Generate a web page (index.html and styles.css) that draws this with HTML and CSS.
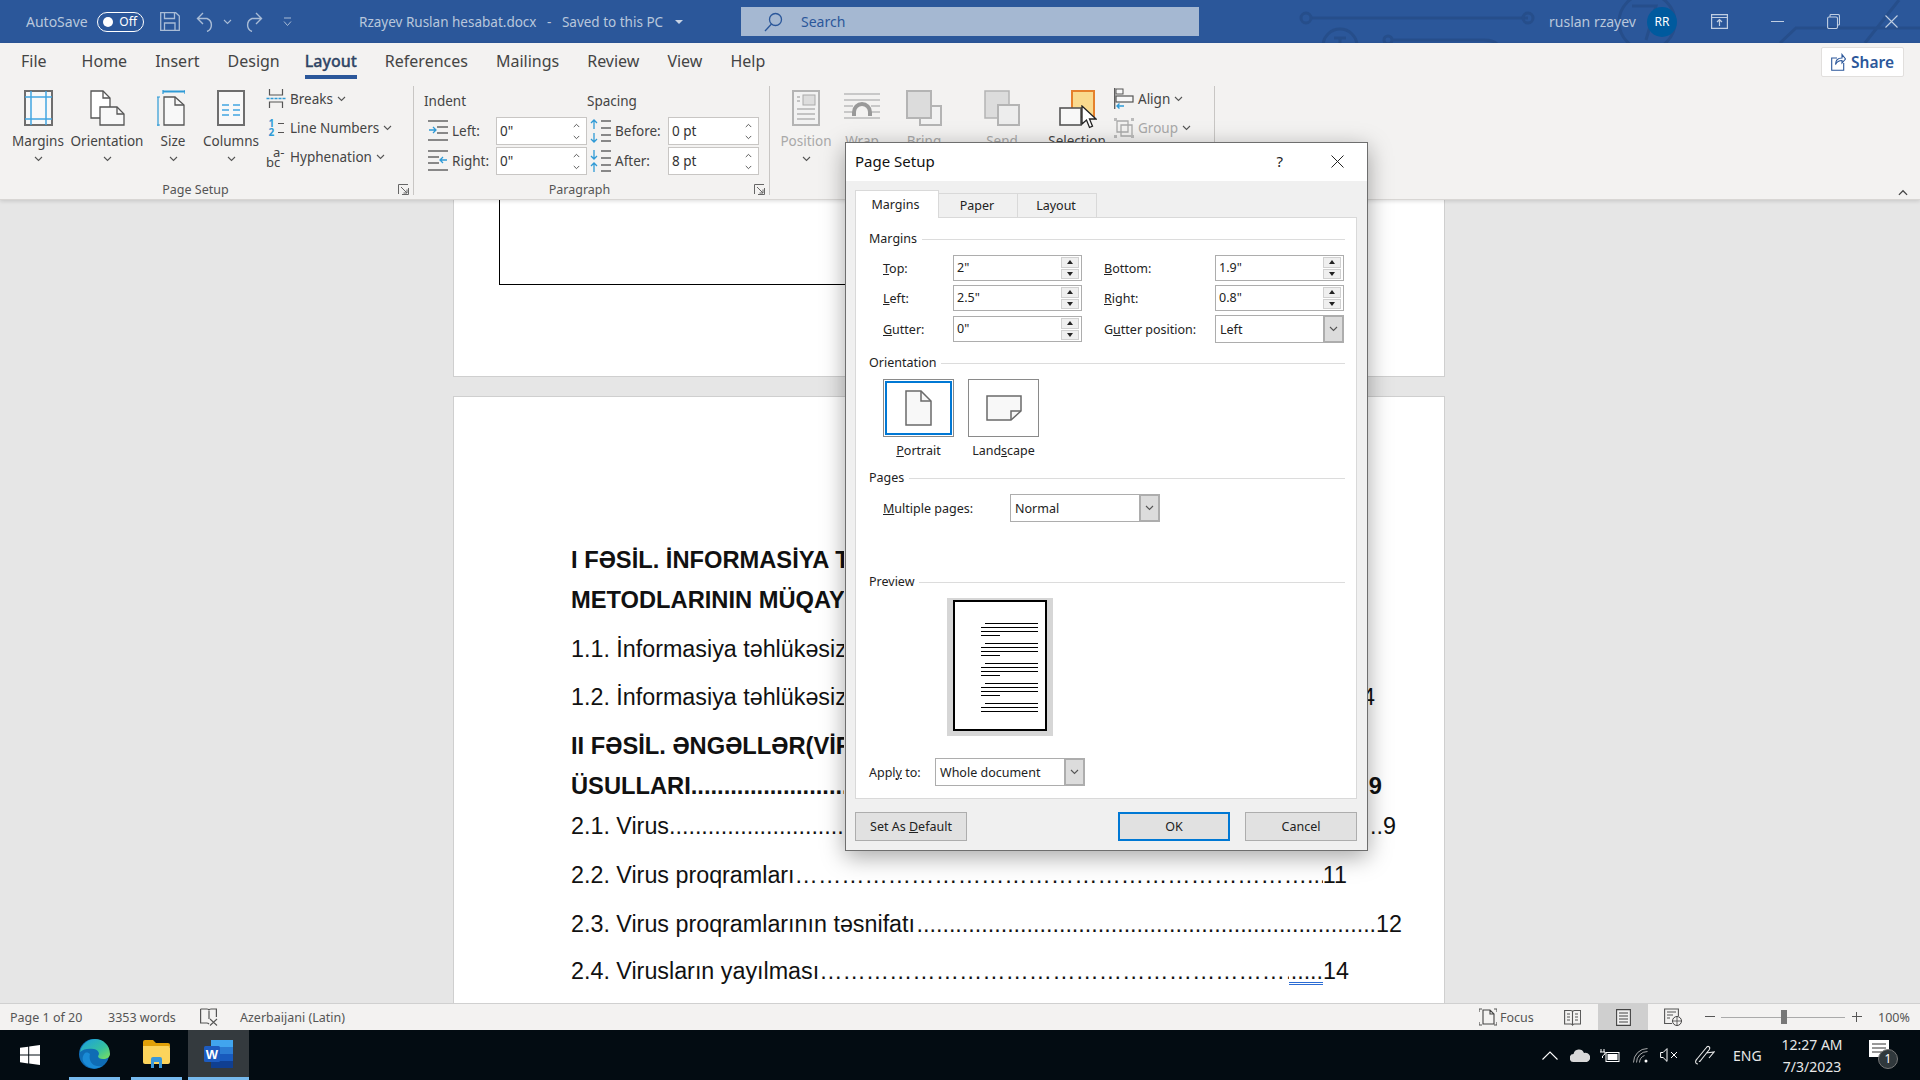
FILE: index.html
```html
<!DOCTYPE html>
<html lang="en">
<head>
    <meta charset="UTF-8">
    <title>Rzayev Ruslan hesabat.docx - Word</title>
    <link rel="stylesheet" href="styles.css">
</head>
<body>

<svg class="sprites" width="0" height="0">
    <symbol id="chev" viewBox="0 0 9 6"><path d="M1 1l3.500 3.500L8 1" fill="none" stroke="currentColor" stroke-width="1.100"/></symbol>
    <symbol id="chev-up" viewBox="0 0 9 6"><path d="M1 5l3.500-3.500L8 5" fill="none" stroke="currentColor" stroke-width="1.100"/></symbol>
    <symbol id="launcher" viewBox="0 0 11 11"><path d="M.5 10V.5H10M10.500 4v6.500H4M3 3l6 6M9 5.500V9H5.500" fill="none" stroke="#666" stroke-width="1"/></symbol>
</svg>

<!-- Title bar -->
<header class="titlebar">
    <svg class="circuit" width="640" height="43" viewBox="0 0 640 43">
        <g fill="none" stroke="#264e8b" stroke-width="3">
            <path d="M30 18h218"/>
            <circle cx="26" cy="18" r="5"/><circle cx="248" cy="18" r="5"/>
            <circle cx="60" cy="46" r="17"/><path d="M54 38h12M60 38v10"/>
            <circle cx="108" cy="40" r="4"/><path d="M112 40h92q12 0 14 6"/>
            <circle cx="367" cy="22" r="28"/><path d="M352 6h24l-10 34"/>
            <path d="M500 43l16-15h124M585 43l34-43"/>
        </g>
    </svg>
    <span class="autosave">AutoSave</span>
    <span class="toggle"><i class="toggle-dot"></i>Off</span>
    <svg class="tb-save" width="20" height="19" viewBox="0 0 20 19"><path d="M.7.7h15l3.600 3.400v14.200H.7zM4.500 1v5.500h10V1M4.500 18v-7h10.500v7" fill="none" stroke="#a9bcd6" stroke-width="1.300"/></svg>
    <svg class="tb-undo" width="20" height="20" viewBox="0 0 20 20"><path d="M7 1L1.500 6.500 7 12M2 6.500h9a7 7 0 0 1 0 13" fill="none" stroke="#a9bcd6" stroke-width="1.400"/></svg>
    <svg class="tb-chev" width="9" height="6"><use href="#chev"/></svg>
    <svg class="tb-redo" width="20" height="20" viewBox="0 0 20 20"><path d="M13 1l5.500 5.500L13 12M18 6.500H9a7 7 0 0 0 0 13" fill="none" stroke="#a9bcd6" stroke-width="1.400"/></svg>
    <svg class="tb-more" width="9" height="10" viewBox="0 0 9 10"><path d="M1 1h7M1 4.500l3.500 4 3.500-4" fill="none" stroke="#a9bcd6" stroke-width="1"/></svg>
    <span class="doc-title">Rzayev Ruslan hesabat.docx&nbsp;&nbsp;&nbsp;-&nbsp;&nbsp;&nbsp;Saved to this PC</span>
    <i class="title-caret"></i>
    <div class="search">
        <svg width="19" height="20" viewBox="0 0 19 20"><circle cx="11.500" cy="7.500" r="6" fill="none" stroke="#2b579a" stroke-width="1.300"/><path d="M7.500 12L1 19" stroke="#2b579a" stroke-width="1.300"/></svg>
        <span>Search</span>
    </div>
    <div class="tb-right">
        <span class="user">ruslan rzayev</span>
        <span class="avatar">RR</span>
        <svg class="win-display" width="17" height="15" viewBox="0 0 17 15"><path d="M.6.6h15.800v13.800H.6zM1 3.500h15M8.500 12V6M6 8l2.500-2.500L11 8" fill="none" stroke="#c0cee2" stroke-width="1.200"/></svg>
        <svg class="win-min" width="13" height="1" viewBox="0 0 13 1"><path d="M0 .5h13" stroke="#c0cee2"/></svg>
        <svg class="win-restore" width="13" height="15" viewBox="0 0 13 15"><path d="M3 3V1.500q0-1 1-1h7q1.500 0 1.500 1.500v8q0 1-1 1H11M.6 4.500q0-1.500 1.400-1.500h7q1.500 0 1.500 1.500V13q0 1.500-1.500 1.500H2Q.6 14.500.6 13z" fill="none" stroke="#c0cee2" stroke-width="1.100"/></svg>
        <svg class="win-close" width="13" height="13" viewBox="0 0 13 13"><path d="M.5.500l12 12M12.500.500l-12 12" stroke="#c0cee2" stroke-width="1.100"/></svg>
    </div>
</header>

<!-- Ribbon -->
<section class="ribbon">
    <nav class="tabs">
        <span class="tab tab-file">File</span>
        <span class="tab">Home</span>
        <span class="tab">Insert</span>
        <span class="tab">Design</span>
        <span class="tab tab-active">Layout</span>
        <span class="tab">References</span>
        <span class="tab">Mailings</span>
        <span class="tab">Review</span>
        <span class="tab">View</span>
        <span class="tab">Help</span>
        <button class="share">
            <svg width="15" height="18" viewBox="0 0 15 18"><path d="M6 5H.7v12.300h12V10M4.500 11.500C4.500 7 7 5 11 5V1.500L14.500 6 11 10V7.500c-3 0-5 1-6.500 4z" fill="none" stroke="#2b579a" stroke-width="1.100"/></svg>
            Share
        </button>
    </nav>
    <div class="groups">
        <div class="group group-page">
            <div class="group-body">
                <div class="big big-margins">
                    <svg width="29" height="36" viewBox="0 0 29 36"><rect x="1" y="1" width="27" height="34" fill="#f8f8f8" stroke="#6e6e6e" stroke-width="2"/><path d="M7 1v34M22 1v34M1 7h27M1 29h27" stroke="#41a5e1" stroke-width="1.500"/></svg>
                    <span class="big-label">Margins</span>
                    <svg class="big-chev" width="9" height="6"><use href="#chev"/></svg>
                </div>
                <div class="big big-orient">
                    <svg width="35" height="36" viewBox="0 0 35 36"><path d="M1 1h12l7 7v20H1z" fill="#fff" stroke="#555" stroke-width="1.300"/><path d="M13 1v7h7" fill="none" stroke="#555" stroke-width="1.300"/><path d="M10 17h17l7 7v11H10z" fill="#f8f8f8" stroke="#555" stroke-width="1.300"/><path d="M27 17v7h7" fill="none" stroke="#555" stroke-width="1.300"/></svg>
                    <span class="big-label">Orientation</span>
                    <svg class="big-chev" width="9" height="6"><use href="#chev"/></svg>
                </div>
                <div class="big big-size">
                    <svg class="size-icon" width="28" height="36" viewBox="0 0 28 36"><path d="M6 1h22M6 0v4M28 0v4M6 2h22M1 7v29M0 7h3M0 35h3" fill="none" stroke="#2e9ad6" stroke-width="1.200"/><path d="M7 7h11l9 8v20H7z" fill="#f8f8f8" stroke="#555" stroke-width="1.300"/><path d="M18 7v8h9" fill="none" stroke="#555" stroke-width="1.300"/></svg>
                    <span class="big-label">Size</span>
                    <svg class="big-chev" width="9" height="6"><use href="#chev"/></svg>
                </div>
                <div class="big big-columns">
                    <svg width="28" height="36" viewBox="0 0 28 36"><rect x="1" y="1" width="26" height="34" fill="#f8f8f8" stroke="#6e6e6e" stroke-width="2"/><path d="M5 15h7M16 15h7M5 20h7M16 20h7M5 25h7M16 25h7" stroke="#41a5e1" stroke-width="1.500"/></svg>
                    <span class="big-label">Columns</span>
                    <svg class="big-chev" width="9" height="6"><use href="#chev"/></svg>
                </div>
                <div class="small-col">
                    <div class="small">
                        <svg width="19" height="19" viewBox="0 0 19 19"><path d="M3 0v6h13V0M3 19v-6h13v6" fill="none" stroke="#555" stroke-width="1.200"/><path d="M0 9.500h19" stroke="#2e9ad6" stroke-width="1.300" stroke-dasharray="3 1"/></svg>
                        <span>Breaks</span>
                        <svg width="9" height="6"><use href="#chev"/></svg>
                    </div>
                    <div class="small">
                        <span class="icon-numbers"><b>1</b><em></em><b>2</b><em></em></span>
                        <span>Line Numbers</span>
                        <svg width="9" height="6"><use href="#chev"/></svg>
                    </div>
                    <div class="small">
                        <span class="icon-hyphen"><span>a-</span><span>bc</span></span>
                        <span>Hyphenation</span>
                        <svg width="9" height="6"><use href="#chev"/></svg>
                    </div>
                </div>
            </div>
            <div class="group-label">Page Setup</div>
            <svg class="launcher" width="11" height="11"><use href="#launcher"/></svg>
        </div>

        <div class="group group-para">
            <div class="para-cols">
                <div class="para-col para-indent">
                    <div class="para-head">Indent</div>
                    <div class="para-row">
                        <svg width="20" height="24" viewBox="0 0 20 24"><path d="M0 2h20M9 8h11M9 14h11M0 21h20" stroke="#666" stroke-width="1.300"/><path d="M1 11h7M5 8l3 3-3 3" fill="none" stroke="#2e9ad6" stroke-width="1.300"/></svg>
                        <span class="para-label">Left:</span>
                        <div class="para-field">0"<span class="para-spin"><svg width="7" height="5"><use href="#chev-up"/></svg><svg width="7" height="5"><use href="#chev"/></svg></span></div>
                    </div>
                    <div class="para-row">
                        <svg width="20" height="24" viewBox="0 0 20 24"><path d="M0 2h20M0 8h11M0 14h11M0 21h20" stroke="#666" stroke-width="1.300"/><path d="M19 11h-7M15 8l-3 3 3 3" fill="none" stroke="#2e9ad6" stroke-width="1.300"/></svg>
                        <span class="para-label">Right:</span>
                        <div class="para-field">0"<span class="para-spin"><svg width="7" height="5"><use href="#chev-up"/></svg><svg width="7" height="5"><use href="#chev"/></svg></span></div>
                    </div>
                </div>
                <div class="para-col para-spacing">
                    <div class="para-head">Spacing</div>
                    <div class="para-row">
                        <svg width="21" height="24" viewBox="0 0 21 24"><path d="M11 2h10M11 9h10M11 16h10M11 22h10" stroke="#666" stroke-width="1.300"/><path d="M4 1v9M1 4l3-3 3 3M4 14v9M1 20l3 3 3-3" fill="none" stroke="#2e9ad6" stroke-width="1.300"/></svg>
                        <span class="para-label">Before:</span>
                        <div class="para-field">0 pt<span class="para-spin"><svg width="7" height="5"><use href="#chev-up"/></svg><svg width="7" height="5"><use href="#chev"/></svg></span></div>
                    </div>
                    <div class="para-row">
                        <svg width="21" height="24" viewBox="0 0 21 24"><path d="M11 2h10M11 9h10M11 16h10M11 22h10" stroke="#666" stroke-width="1.300"/><path d="M4 1v9M1 7l3 3 3-3M4 14v9M1 17l3-3 3 3" fill="none" stroke="#2e9ad6" stroke-width="1.300"/></svg>
                        <span class="para-label">After:</span>
                        <div class="para-field">8 pt<span class="para-spin"><svg width="7" height="5"><use href="#chev-up"/></svg><svg width="7" height="5"><use href="#chev"/></svg></span></div>
                    </div>
                </div>
            </div>
            <div class="group-label">Paragraph</div>
            <svg class="launcher" width="11" height="11"><use href="#launcher"/></svg>
        </div>

        <div class="group group-arrange">
            <div class="group-body">
                <div class="big big-disabled big-position">
                    <svg width="28" height="36" viewBox="0 0 28 36"><rect x="1" y="1" width="26" height="34" fill="#f2f2f2" stroke="#b4b4b4" stroke-width="2"/><rect x="11" y="5" width="12" height="10" fill="#ddd" stroke="#aaa"/><path d="M5 7h3M5 11h3M5 19h18M5 24h18M5 29h18" stroke="#b4b4b4" stroke-width="1.300"/></svg>
                    <span class="big-label">Position</span>
                    <svg class="big-chev" width="9" height="6"><use href="#chev"/></svg>
                </div>
                <div class="big big-disabled big-wrap">
                    <svg width="36" height="32" viewBox="0 0 36 32"><path d="M0 2h36M0 8h36M0 14h9M27 14h9M0 20h8M28 20h8M0 26h36" stroke="#bbb" stroke-width="1.500"/><path d="M10 24v-4a8 8 0 0 1 16 0v4" fill="none" stroke="#999" stroke-width="4"/></svg>
                    <span class="big-label">Wrap</span>
                </div>
                <div class="big big-disabled big-bring">
                    <svg width="36" height="36" viewBox="0 0 36 36"><rect x="14" y="16" width="21" height="19" fill="#f2f2f2" stroke="#b4b4b4" stroke-width="2"/><rect x="1" y="1" width="24" height="27" fill="#dcdcdc" stroke="#b4b4b4" stroke-width="2"/></svg>
                    <span class="big-label">Bring</span>
                </div>
                <div class="big big-disabled big-send">
                    <svg width="36" height="36" viewBox="0 0 36 36"><rect x="1" y="1" width="24" height="27" fill="#dcdcdc" stroke="#b4b4b4" stroke-width="1.500"/><rect x="14" y="15" width="21" height="20" fill="#ededed" stroke="#b4b4b4" stroke-width="2"/></svg>
                    <span class="big-label">Send</span>
                </div>
                <div class="big big-select">
                    <svg width="37" height="36" viewBox="0 0 37 36"><rect x="13" y="1" width="22" height="26" fill="#f9da8e" stroke="#e5812c" stroke-width="2"/><rect x="1" y="18" width="21" height="17" fill="#f8f8f8" stroke="#555" stroke-width="1.600"/></svg>
                    <span class="big-label">Selection</span>
                </div>
                <div class="small-col small-col-arrange">
                    <div class="small">
                        <svg width="20" height="21" viewBox="0 0 20 21"><path d="M.7 0v21" stroke="#555" stroke-width="1.300"/><rect x="2" y="1" width="7" height="5" fill="#f8f8f8" stroke="#555"/><rect x="2" y="8" width="17" height="6" fill="#f8f8f8" stroke="#555" stroke-width="1.200"/><path d="M10 18H3M5.500 15.500L3 18l2.500 2.500" fill="none" stroke="#2e9ad6" stroke-width="1.400"/></svg>
                        <span>Align</span>
                        <svg width="9" height="6"><use href="#chev"/></svg>
                    </div>
                    <div class="small small-disabled">
                        <svg width="20" height="20" viewBox="0 0 20 20"><path d="M3 3h11v11H3zM7 7h11v11H7z" fill="none" stroke="#aaa" stroke-width="1.300"/><path d="M0 0h3v3H0zM17 0h3v3h-3zM0 17h3v3H0zM17 17h3v3h-3z" fill="#bbb"/></svg>
                        <span>Group</span>
                        <svg width="9" height="6"><use href="#chev"/></svg>
                    </div>
                </div>
            </div>
        </div>
    </div>
    <svg class="collapse" width="12" height="7"><use href="#chev-up"/></svg>
    <svg class="cursor" width="16" height="24" viewBox="0 0 16 24"><path d="M1 1v18l4.500-4 3 7.500 3-1.300-3-7.200H15z" fill="#fff" stroke="#222" stroke-width="1.300"/></svg>
</section>

<!-- Document -->
<main class="doc">
    <div class="page page-one"><div class="frame"></div></div>
    <div class="page page-two">
        <p class="toc toc-bold toc-40"><span class="toc-left">I FƏSİL. İNFORMASİYA T</span></p>
        <p class="toc toc-bold toc-40"><span class="toc-left">METODLARININ MÜQAYİ</span></p>
        <p class="toc toc-49"><span class="toc-left">1.1. İnformasiya təhlükəsiz</span></p>
        <p class="toc toc-48 end-4"><span class="toc-left">1.2. İnformasiya təhlükəsiz</span><span class="toc-end">4</span></p>
        <p class="toc toc-bold toc-49"><span class="toc-left">II FƏSİL. ƏNGƏLLƏR(VİR</span></p>
        <p class="toc toc-bold toc-40 end-9b"><span class="toc-left">ÜSULLARI........................</span><span class="toc-end">.9</span></p>
        <p class="toc toc-40 end-9"><span class="toc-left">2.1. Virus...........................</span><span class="toc-end">..9</span></p>
        <p class="toc toc-49 end-11"><span>2.2. Virus proqramları</span><span class="dots">…………………………………………………………........</span><span>11</span></p>
        <p class="toc toc-49 end-12"><span>2.3. Virus proqramlarının təsnifatı</span><span class="dots">.......................................................................</span><span>12</span></p>
        <p class="toc toc-47 end-14"><span>2.4. Virusların yayılması</span><span class="dots">………………………………………………………….</span><span class="grammar">.....</span><span>14</span></p>
    </div>
</main>

<!-- Page Setup dialog -->
<div class="dialog">
    <div class="dlg-title">
        <span class="dlg-caption">Page Setup</span>
        <span class="dlg-help">?</span>
        <svg class="dlg-close" width="13" height="13" viewBox="0 0 13 13"><path d="M.5.500l12 12M12.500.500l-12 12" stroke="#222" stroke-width="1"/></svg>
    </div>
    <div class="dlg-body">
        <div class="dlg-tabs">
            <span class="dlg-tab dlg-tab-on">Margins</span>
            <span class="dlg-tab">Paper</span>
            <span class="dlg-tab">Layout</span>
        </div>
        <div class="dlg-panel">
            <div class="legend">Margins</div>
            <div class="margin-grid">
                <label class="f-label"><u>T</u>op:</label>
                <div class="spin"><span class="spin-val">2"</span><span class="spin-btns"><i class="up"></i><i class="down"></i></span></div>
                <label class="f-label"><u>B</u>ottom:</label>
                <div class="spin"><span class="spin-val">1.9"</span><span class="spin-btns"><i class="up"></i><i class="down"></i></span></div>
                <label class="f-label"><u>L</u>eft:</label>
                <div class="spin"><span class="spin-val">2.5"</span><span class="spin-btns"><i class="up"></i><i class="down"></i></span></div>
                <label class="f-label"><u>R</u>ight:</label>
                <div class="spin"><span class="spin-val">0.8"</span><span class="spin-btns"><i class="up"></i><i class="down"></i></span></div>
                <label class="f-label"><u>G</u>utter:</label>
                <div class="spin"><span class="spin-val">0"</span><span class="spin-btns"><i class="up"></i><i class="down"></i></span></div>
                <label class="f-label">G<u>u</u>tter position:</label>
                <div class="combo combo-gutter"><span>Left</span><b><svg width="9" height="6"><use href="#chev"/></svg></b></div>
            </div>

            <div class="legend legend-orient">Orientation</div>
            <div class="orient">
                <div class="orient-item">
                    <div class="orient-box orient-on">
                        <svg width="27" height="36" viewBox="0 0 27 36"><path d="M1 1h15l10 10v24H1z" fill="#f8f8f8" stroke="#6a6a6a" stroke-width="1.500"/><path d="M16 1v10h10" fill="none" stroke="#6a6a6a" stroke-width="1.500"/></svg>
                    </div>
                    <span><u>P</u>ortrait</span>
                </div>
                <div class="orient-item">
                    <div class="orient-box">
                        <svg width="36" height="26" viewBox="0 0 36 26"><path d="M1 1h34v15L25 25H1z" fill="#f8f8f8" stroke="#6a6a6a" stroke-width="1.500"/><path d="M35 16H25v9" fill="none" stroke="#6a6a6a" stroke-width="1.500"/></svg>
                    </div>
                    <span>Land<u>s</u>cape</span>
                </div>
            </div>

            <div class="legend legend-pages">Pages</div>
            <div class="multi-row">
                <label class="f-label"><u>M</u>ultiple pages:</label>
                <div class="combo combo-multi"><span>Normal</span><b><svg width="9" height="6"><use href="#chev"/></svg></b></div>
            </div>

            <div class="legend legend-preview">Preview</div>
            <div class="preview">
                <div class="preview-sheet">
                    <div class="pv-para"><i class="pv-first"></i><i></i><i></i><i class="pv-last"></i></div>
                    <div class="pv-para"><i class="pv-first"></i><i></i><i></i><i class="pv-last"></i></div>
                    <div class="pv-para"><i class="pv-first"></i><i></i><i></i><i class="pv-last"></i></div>
                    <div class="pv-para"><i class="pv-first"></i><i></i><i></i><i class="pv-last"></i></div>
                    <div class="pv-para"><i class="pv-first"></i><i></i><i></i></div>
                </div>
            </div>

            <div class="apply-row">
                <label class="f-label apply-label">Appl<u>y</u> to:</label>
                <div class="combo combo-apply"><span>Whole document</span><b><svg width="9" height="6"><use href="#chev"/></svg></b></div>
            </div>
        </div>
        <div class="dlg-buttons">
            <button class="dlg-btn">Set As <u>D</u>efault</button>
            <button class="dlg-btn dlg-ok">OK</button>
            <button class="dlg-btn">Cancel</button>
        </div>
    </div>
</div>

<!-- Status bar -->
<footer class="statusbar">
    <span class="st-page">Page 1 of 20</span>
    <span class="st-words">3353 words</span>
    <svg class="st-proof" width="18" height="18" viewBox="0 0 18 18"><path d="M.6 1h6.400q2 0 2 1.500 0-1.500 2-1.500h5.400v8M.6 1v14h6q1.500 0 2.400 1M9 3v8" fill="none" stroke="#555" stroke-width="1.200"/><path d="M10 11l7 6.500M17 11l-7 6.500" stroke="#555" stroke-width="1.100"/></svg>
    <span class="st-lang">Azerbaijani (Latin)</span>
    <div class="st-right">
        <svg width="18" height="18" viewBox="0 0 18 18"><path d="M0 4V1h3M15 1h3v3M18 14v3h-3M3 17H0v-3" fill="none" stroke="#555" stroke-width="1.200"/><path d="M4 2h7l4 4v10H4zM11 2v4h4" fill="none" stroke="#444" stroke-width="1.100"/></svg>
        <span class="st-focus">Focus</span>
        <svg class="st-read" width="17" height="17" viewBox="0 0 17 17"><path d="M.6 1.500h6q2 0 2 1.500 0-1.500 2-1.500h6V15h-6q-1.500 0-2 1-.5-1-2-1h-6zM8.500 3v13M3 5h3M3 8h3M3 11h3M11 5h3M11 8h3M11 11h3" fill="none" stroke="#555" stroke-width="1.100"/></svg>
        <span class="st-print"><svg width="15" height="17" viewBox="0 0 15 17"><path d="M.6.600h13.800v15.800H.6zM3 4h9M3 7h9M3 10h9M3 13h9" fill="#f0f0f0" stroke="#444" stroke-width="1.100"/></svg></span>
        <svg class="st-web" width="18" height="18" viewBox="0 0 18 18"><path d="M8 15.500H.6V1h13.800v7M3 4h9M3 7h6M3 10h3" fill="none" stroke="#555" stroke-width="1.100"/><circle cx="13" cy="13" r="4.500" fill="#f3f2f1" stroke="#444"/><path d="M8.500 13h9M13 8.500v9" stroke="#444" stroke-width=".8"/></svg>
        <span class="zoom-btn zoom-minus"></span>
        <span class="zoom-track"><i></i></span>
        <span class="zoom-btn zoom-plus"></span>
        <span class="zoom-pct">100%</span>
    </div>
</footer>

<!-- Taskbar -->
<footer class="taskbar">
    <svg class="task-start" width="20" height="20" viewBox="0 0 20 20"><path d="M0 2.800l8.200-1.100v7.900H0zM9.200 1.500L20 0v9.600H9.200zM0 10.600h8.200v7.900L0 17.200zM9.200 10.600H20V20L9.200 18.600z" fill="#fff"/></svg>
    <span class="task-item task-edge">
        <svg width="31" height="30" viewBox="0 0 31 30">
            <defs><linearGradient id="edge-g" x1="0" y1="0" x2="1" y2="1"><stop offset="0" stop-color="#1b9de2"/><stop offset=".6" stop-color="#35c1a0"/><stop offset="1" stop-color="#7fe05a"/></linearGradient></defs>
            <circle cx="15" cy="15" r="15" fill="#0f6cb4"/>
            <path d="M1 13C3 4 10 0 16 0c8 0 15 6 15 15 0 3-3 5-7 5-3 0-5-1-5-3 2-2 1-6-4-7-6-1-11 0-14 3z" fill="url(#edge-g)"/>
            <path d="M11 15c-2 7 3 14 12 12-5 4-14 3-18-3-2-3-2-7 1-10 2-1 4 0 5 1z" fill="#1a8bd6"/>
        </svg>
    </span>
    <span class="task-item task-files">
        <svg width="27" height="28" viewBox="0 0 27 28"><path d="M0 2q0-2 2-2h8l3 3h12q2 0 2 2v2H0z" fill="#e0a008"/><path d="M0 6h25q2 0 2 2v14q0 2-2 2H2q-2 0-2-2z" fill="#fcd45c"/><path d="M8 28v-9q0-2 2-2h7q2 0 2 2v9h-3v-6h-5v6z" fill="#3a98d9"/></svg>
    </span>
    <span class="task-item task-word">
        <svg width="29" height="28" viewBox="0 0 29 28">
            <rect x="7" y="0" width="22" height="7" fill="#41a5ee"/><rect x="7" y="7" width="22" height="7" fill="#2b7cd3"/><rect x="7" y="14" width="22" height="7" fill="#185abd"/><rect x="7" y="21" width="22" height="7" fill="#103f91"/>
            <rect x="0" y="6" width="16" height="16" rx="1.500" fill="#1d5bbf"/>
            <text x="8" y="19" text-anchor="middle" class="word-w">W</text>
        </svg>
    </span>
    <div class="tray">
        <svg class="tray-up" width="16" height="9" viewBox="0 0 16 9"><path d="M.5 8.500L8 1l7.500 7.500" fill="none" stroke="#fff" stroke-width="1.100"/></svg>
        <svg class="tray-cloud" width="20" height="13" viewBox="0 0 20 13"><path d="M4 13a4 4 0 0 1-.5-8A5.500 5.500 0 0 1 14 4a4.500 4.500 0 0 1 3 9z" fill="#d8d8d8"/></svg>
        <svg class="tray-batt" width="20" height="13" viewBox="0 0 20 13"><path d="M1 0v3M4 0v3M0 3h5v2L2.500 7v2" fill="none" stroke="#fff"/><rect x="6" y="3.500" width="13" height="9" fill="none" stroke="#fff"/><rect x="7.500" y="5" width="10" height="6" fill="#fff"/></svg>
        <svg class="tray-wifi" width="15" height="15" viewBox="0 0 15 15"><path d="M.5 14.500a14 14 0 0 1 14-14M3.500 14.500a11 11 0 0 1 11-11M6.500 14.500a8 8 0 0 1 5-7" fill="none" stroke="#bbb" stroke-width=".9"/><circle cx="13" cy="13" r="1.500" fill="#fff"/></svg>
        <svg class="tray-sound" width="18" height="14" viewBox="0 0 18 14"><path d="M.6 4.500h2.500L7 .6v12.800l-3.900-3.900H.6zM11 4l6 6M17 4l-6 6" fill="none" stroke="#fff" stroke-width="1"/></svg>
        <svg class="tray-pen" width="20" height="20" viewBox="0 0 20 20"><path d="M3 19c-3 0-3-3-1-5l9-11c2-3 5-1 3 2L6 15q-1 2-2 1M11 8l8-1-5 6" fill="none" stroke="#e8e8e8" stroke-width="1.100"/></svg>
        <span class="tray-lang">ENG</span>
        <div class="tray-clock"><span>12:27 AM</span><span>7/3/2023</span></div>
        <div class="tray-note">
            <svg width="20" height="18" viewBox="0 0 20 18"><path d="M0 0h20v17H0z" fill="#fff"/><path d="M3 4h14M3 8h14M3 12h10" stroke="#333"/></svg>
            <span class="tray-badge">1</span>
        </div>
    </div>
</footer>

</body>
</html>
```

FILE: styles.css
```css
* { box-sizing: border-box; }
html, body { margin: 0; height: 100%; }
body { width: 1920px; height: 1080px; overflow: hidden; display: flex; flex-direction: column; position: relative; font-family: "Noto Sans", "Open Sans", sans-serif; color: #444; }
.sprites { position: absolute; }

/* title bar */
.titlebar { height: 43px; flex: none; background: #2b579a; color: #c8d3e4; display: flex; align-items: center; font-size: 13px; position: relative; overflow: hidden; }
.circuit { position: absolute; right: 0; top: 0; }
.autosave { margin-left: 26px; font-size: 14px; width: 71px; color: #b9c7dc; }
.toggle { width: 47px; height: 20px; border: 1px solid #fff; border-radius: 10px; display: flex; align-items: center; justify-content: flex-end; padding-right: 6px; font-size: 12px; color: #fff; position: relative; }
.toggle-dot { position: absolute; left: 5px; top: 4px; width: 10px; height: 10px; border-radius: 50%; background: #fff; }
.tb-save { margin-left: 16px; }
.tb-undo { margin-left: 16px; }
.tb-chev { margin-left: 7px; color: #a9bcd6; }
.tb-redo { margin-left: 11px; }
.tb-more { margin-left: 20px; }
.doc-title { margin-left: 67px; width: 311px; white-space: nowrap; font-size: 13.500px; color: #b9c7dc; }
.title-caret { border: 4px solid transparent; border-top-color: #c8d3e4; border-bottom: 0; margin-left: 5px; }
.search { margin-left: 58px; width: 458px; height: 29px; background: #a5b8d2; display: flex; align-items: center; padding-left: 23px; color: #2b579a; font-size: 14px; }
.search span { margin-left: 18px; }
.tb-right { position: absolute; left: 1549px; top: 0; height: 43px; display: flex; align-items: center; }
.user { width: 98px; font-size: 14px; color: #b9c7dc; white-space: nowrap; }
.avatar { width: 30px; height: 30px; border-radius: 50%; background: #005a9e; color: #fff; font-size: 12px; display: flex; align-items: center; justify-content: center; }
.win-display { margin-left: 34px; }
.win-min { margin-left: 43px; }
.win-restore { margin-left: 43px; }
.win-close { margin-left: 45px; }

/* ribbon */
.ribbon { height: 157px; flex: none; background: #f3f2f1; border-bottom: 1px solid #d8d6d4; box-shadow: 0 1px 4px rgba(0,0,0,.15); position: relative; z-index: 1; }
.tabs { height: 38px; display: flex; padding-left: 21px; font-size: 16px; }
.tab { margin-right: 28px; padding-top: 8px; height: 36px; line-height: 21px; white-space: nowrap; }
.tab-file { margin-right: 35px; }
.tab-active { margin-left: -3px; color: #2b4a78; font-weight: 500; -webkit-text-stroke: .3px #333; border-bottom: 4px solid #2b579a; }
.share { margin-left: auto; margin-right: 16px; margin-top: 4px; width: 83px; height: 30px; background: #fff; border: 1px solid #e1dfdd; border-radius: 2px; color: #2b579a; font: 600 15.500px "Noto Sans", sans-serif; display: flex; align-items: center; justify-content: center; gap: 5px; padding: 0; }
.groups { display: flex; padding-top: 5px; font-size: 13.500px; }
.group { height: 109px; border-right: 1px solid #c8c6c4; position: relative; display: flex; flex-direction: column; }
.group-page { width: 414px; }
.group-para { width: 356px; }
.group-arrange { width: 445px; }
.group-body { display: flex; flex: 1; padding-left: 8px; }
.group-arrange .group-body { padding-left: 6px; }
.group-label { position: absolute; left: 0; right: 0; bottom: -4px; height: 18px; line-height: 18px; text-align: center; font-size: 12.500px; color: #555; }
.group-page .group-label { padding-right: 22px; }
.group-para .group-label { padding-right: 24px; }
.launcher { position: absolute; right: 4px; bottom: 0; }

.big { display: flex; flex-direction: column; align-items: center; padding-top: 4px; height: 104px; overflow: visible; }
.big > svg:first-child { height: 36px; flex: none; }
.big-label { margin-top: 6px; line-height: 18px; white-space: nowrap; text-align: center; }
.big-chev { margin-top: 6px; color: #555; }
.big-margins { width: 60px; }
.big-orient { width: 78px; }
.big-size { width: 54px; }
.size-icon { margin-right: 4px; }
.big-columns { width: 62px; }
.big-position { width: 60px; }
.big-wrap { width: 52px; }
.big-bring { width: 72px; }
.big-send { width: 84px; }
.big-select { width: 66px; }
.big-disabled { color: #a9a9a9; }
.small-col { margin-left: 4px; padding-top: 3px; display: flex; flex-direction: column; gap: 10px; }
.small-col-arrange { margin-left: 4px; }
.small { display: flex; align-items: center; height: 19px; gap: 4px; white-space: nowrap; }
.small > svg:first-child, .icon-numbers, .icon-hyphen { flex: none; width: 20px; }
.small > svg:last-child { color: #555; }
.small-disabled { color: #a9a9a9; }
.icon-numbers { display: grid; grid-template-columns: 9px 6px; justify-content: center; align-items: center; line-height: 9px; font-size: 10px; }
.icon-numbers b { color: #2e9ad6; font-weight: 700; }
.icon-numbers em { height: 1px; background: #555; }
.icon-hyphen { display: flex; flex-direction: column; line-height: 10px; font-size: 13px; }
.icon-hyphen span:first-child { margin-left: 7px; }

.para-cols { display: flex; padding-left: 10px; padding-top: 6px; }
.para-indent { width: 163px; }
.para-spacing { width: 172px; }
.para-head { height: 18px; line-height: 18px; margin-bottom: 7px; }
.para-row { display: flex; align-items: center; height: 28px; margin-bottom: 2px; }
.para-row > svg { flex: none; margin-left: 4px; }
.para-spacing .para-row > svg { margin-left: 3px; }
.para-label { margin-left: 4px; }
.para-field { margin-left: auto; width: 91px; height: 28px; background: #fff; border: 1px solid #c8c6c4; display: flex; align-items: center; justify-content: space-between; padding: 0 6px 0 3px; color: #333; font-size: 13.500px; }
.para-spin { display: flex; flex-direction: column; gap: 7px; color: #444; }
.collapse { position: absolute; right: 11px; top: 146px; color: #444; }
.cursor { position: absolute; left: 1081px; top: 62px; z-index: 5; }

/* document */
.doc { flex: 1; background: #e6e6e6; overflow: hidden; display: flex; flex-direction: column; gap: 19px; align-items: flex-start; padding-left: 453px; }
.page { width: 992px; background: #fff; border: 1px solid #cfcfcf; flex: none; }
.page-one { height: 177px; border-top: 0; padding-left: 45px; }
.frame { width: 600px; height: 85px; border: 1px solid #000; border-top: 0; }
.page-two { height: 700px; padding: 143px 0 0 117px; }
.toc { margin: 0; color: #111; font: 23.300px "Liberation Sans", Arial, sans-serif; white-space: nowrap; display: flex; }
.toc-bold { font-size: 23.700px; font-weight: 700; }
.toc-40 { line-height: 40px; }
.toc-49 { margin-top: 9px; line-height: 40px; }
.toc-48 { margin-top: 8px; line-height: 40px; }
.toc-47 { margin-top: 7px; line-height: 40px; }
/* left part stops at the dialog edge, the rest of the line shows on its far side */
.toc-left { width: 273px; overflow: hidden; flex: none; }
.toc-end { margin-left: auto; }
.dots { flex: 1; overflow: hidden; min-width: 0; text-align: right; }
.end-4 { width: 804px; }
.end-9b { width: 811px; }
.end-9 { width: 825px; }
.end-11 { width: 776px; }
.end-12 { width: 831px; }
.end-14 { width: 778px; }
.grammar { height: 34px; padding-left: 2px; border-bottom: 3px double #2b6cd4; }

/* page setup dialog */
.dialog { position: absolute; left: 845px; top: 142px; width: 523px; height: 709px; background: #f0f0f0; border: 1px solid #6e6e6e; box-shadow: 0 6px 22px rgba(0,0,0,.35); z-index: 3; font-size: 12.500px; color: #222; display: flex; flex-direction: column; }
.dlg-title { height: 38px; flex: none; background: #fff; display: flex; align-items: center; padding: 0 0 2px 9px; }
.dlg-caption { font-size: 15px; flex: 1; color: #111; }
.dlg-help { font-size: 15px; margin-right: 48px; }
.dlg-close { margin-right: 23px; }
.dlg-body { flex: 1; padding: 9px 10px 0 9px; }
.dlg-tabs { display: flex; align-items: flex-end; height: 28px; position: relative; z-index: 1; }
.dlg-tab { width: 79px; height: 25px; line-height: 24px; padding-right: 2px; text-align: center; border: 1px solid #d9d9d9; border-left: 0; background: #f0f0f0; }
.dlg-tab-on { width: 84px; height: 28px; line-height: 27px; padding-right: 3px; background: #fff; border-left: 1px solid #d9d9d9; border-bottom: 0; }
.dlg-panel { height: 582px; margin-top: -1px; background: #fff; border: 1px solid #d9d9d9; padding: 12px 11px 0 13px; }
.legend { height: 18px; line-height: 18px; display: flex; align-items: center; gap: 5px; white-space: nowrap; }
.legend::after { content: ""; flex: 1; height: 1px; background: #dcdcdc; }
.legend-orient { margin-top: 11px; }
.legend-pages { margin-top: 9px; }
.legend-preview { margin-top: 51px; }
.margin-grid { margin-top: 7px; padding-left: 14px; display: grid; grid-template-columns: 70px 129px 133px 129px; grid-template-rows: 26px 26px 28px; column-gap: 0; row-gap: 4px; align-items: center; }
.margin-grid .f-label:nth-of-type(even) { margin-left: 22px; }
.f-label { white-space: nowrap; }
.spin { height: 26px; background: #fff; border: 1px solid #adadad; display: flex; justify-content: space-between; padding: 1px 2px 1px 1px; }
.spin-val { line-height: 21px; padding-left: 2px; }
.spin-btns { width: 18px; display: flex; flex-direction: column; gap: 1px; }
.spin-btns i { flex: 1; background: #efefef; border: 1px solid #d0d0d0; display: flex; align-items: center; justify-content: center; }
.spin-btns i::after { content: ""; border: 4px solid transparent; border-left-width: 3.500px; border-right-width: 3.500px; }
.spin-btns .up::after { border-top: 0; border-bottom-color: #222; }
.spin-btns .down::after { border-bottom: 0; border-top-color: #222; }
.combo { height: 28px; background: #fff; border: 1px solid #adadad; display: flex; align-items: center; justify-content: space-between; padding-left: 4px; }
.combo b { width: 21px; height: 28px; margin: -1px; background: #dcdcdc; border: 2px solid #adadad; display: flex; align-items: center; justify-content: center; color: #555; font-weight: 400; }
.orient { margin-top: 7px; padding-left: 14px; display: flex; gap: 14px; }
.orient-item { display: flex; flex-direction: column; align-items: center; width: 71px; line-height: 18px; gap: 5px; }
.orient-box { width: 71px; height: 58px; border: 1px solid #8a8a8a; display: flex; align-items: center; justify-content: center; }
.orient-on { box-shadow: inset 0 0 0 2px #fff; border-color: #8a8a8a; outline: 2px solid #0078d4; outline-offset: -4px; }
.multi-row { margin-top: 7px; padding-left: 14px; display: flex; align-items: center; }
.multi-row .f-label { width: 127px; }
.combo-multi { width: 150px; }
.preview { margin: 7px 0 0 78px; width: 106px; height: 138px; background: #d6d6d6; padding: 2px 6px 5px; }
.preview-sheet { height: 131px; background: #fff; border: 2px solid #000; padding: 21px 7px 0 26px; }
.pv-para { padding-bottom: 4px; }
.pv-para i { display: block; height: 1px; margin-bottom: 3px; background: #000; }
.pv-para .pv-first { margin-left: 4px; }
.pv-para .pv-last { width: 19px; }
.apply-row { margin-top: 22px; display: flex; align-items: center; }
.apply-label { width: 66px; }
.combo-apply { width: 150px; }
.dlg-buttons { margin-top: 13px; display: flex; }
.dlg-btn { width: 112px; height: 29px; padding: 0; background: #e1e1e1; border: 1px solid #adadad; font: 12.500px "Noto Sans", sans-serif; color: #222; }
.dlg-ok { margin-left: auto; margin-right: 15px; border: 2px solid #0078d4; }

/* status bar */
.statusbar { height: 27px; flex: none; background: #f3f2f1; border-top: 1px solid #d0d0d0; display: flex; align-items: center; font-size: 12.500px; color: #555; position: relative; z-index: 1; }
.st-page { margin-left: 10px; width: 98px; }
.st-words { width: 92px; }
.st-lang { margin-left: 22px; }
.st-right { position: absolute; left: 1479px; top: 0; height: 26px; display: flex; align-items: center; }
.st-focus { margin-left: 3px; width: 48px; }
.st-read { margin-left: 16px; }
.st-print { margin-left: 17px; width: 50px; height: 26px; background: #cfcfcf; display: flex; align-items: center; justify-content: center; }
.st-web { margin-left: 16px; }
.zoom-btn { width: 10px; height: 10px; position: relative; }
.zoom-btn::before { content: ""; position: absolute; left: 0; right: 0; top: 4px; height: 1px; background: #555; }
.zoom-minus { margin-left: 23px; }
.zoom-plus { margin-left: 7px; }
.zoom-plus::after { content: ""; position: absolute; left: 4px; top: 0; bottom: 0; width: 1px; background: #555; }
.zoom-track { margin-left: 6px; width: 124px; height: 1px; background: #aaa; position: relative; }
.zoom-track i { position: absolute; left: 60px; top: -7px; width: 6px; height: 14px; background: #777; }
.zoom-pct { margin-left: 16px; }

/* taskbar */
.taskbar { height: 50px; flex: none; background: #030c12; position: relative; z-index: 1; display: flex; align-items: center; color: #fff; }
.task-start { margin-left: 20px; }
.task-item { height: 50px; display: flex; align-items: center; justify-content: center; border-bottom: 3px solid #76b9ed; }
.task-edge { margin-left: 29px; width: 51px; }
.task-files { margin-left: 11px; width: 51px; }
.task-word { margin-left: 6px; width: 61px; background: #343a3e; }
.word-w { font: 700 13px "Liberation Sans", sans-serif; fill: #fff; }
.tray { position: absolute; left: 1542px; top: 0; height: 50px; display: flex; align-items: center; }
.tray-cloud { margin-left: 12px; }
.tray-batt { margin-left: 10px; }
.tray-wifi { margin-left: 13px; }
.tray-sound { margin-left: 12px; }
.tray-pen { margin-left: 17px; }
.tray-lang { margin-left: 18px; width: 49px; font-size: 14px; color: #e8e8e8; }
.tray-clock { width: 60px; display: flex; flex-direction: column; align-items: center; gap: 3px; font-size: 14px; line-height: 19px; color: #e8e8e8; white-space: nowrap; }
.tray-note { margin-left: 27px; position: relative; width: 30px; height: 40px; }
.tray-note svg { position: absolute; left: 0; top: 5px; }
.tray-badge { position: absolute; left: 9px; top: 14px; width: 20px; height: 20px; border-radius: 50%; background: #30383c; border: 1px solid #777; font-size: 12px; line-height: 18px; text-align: center; color: #fff; }
```
